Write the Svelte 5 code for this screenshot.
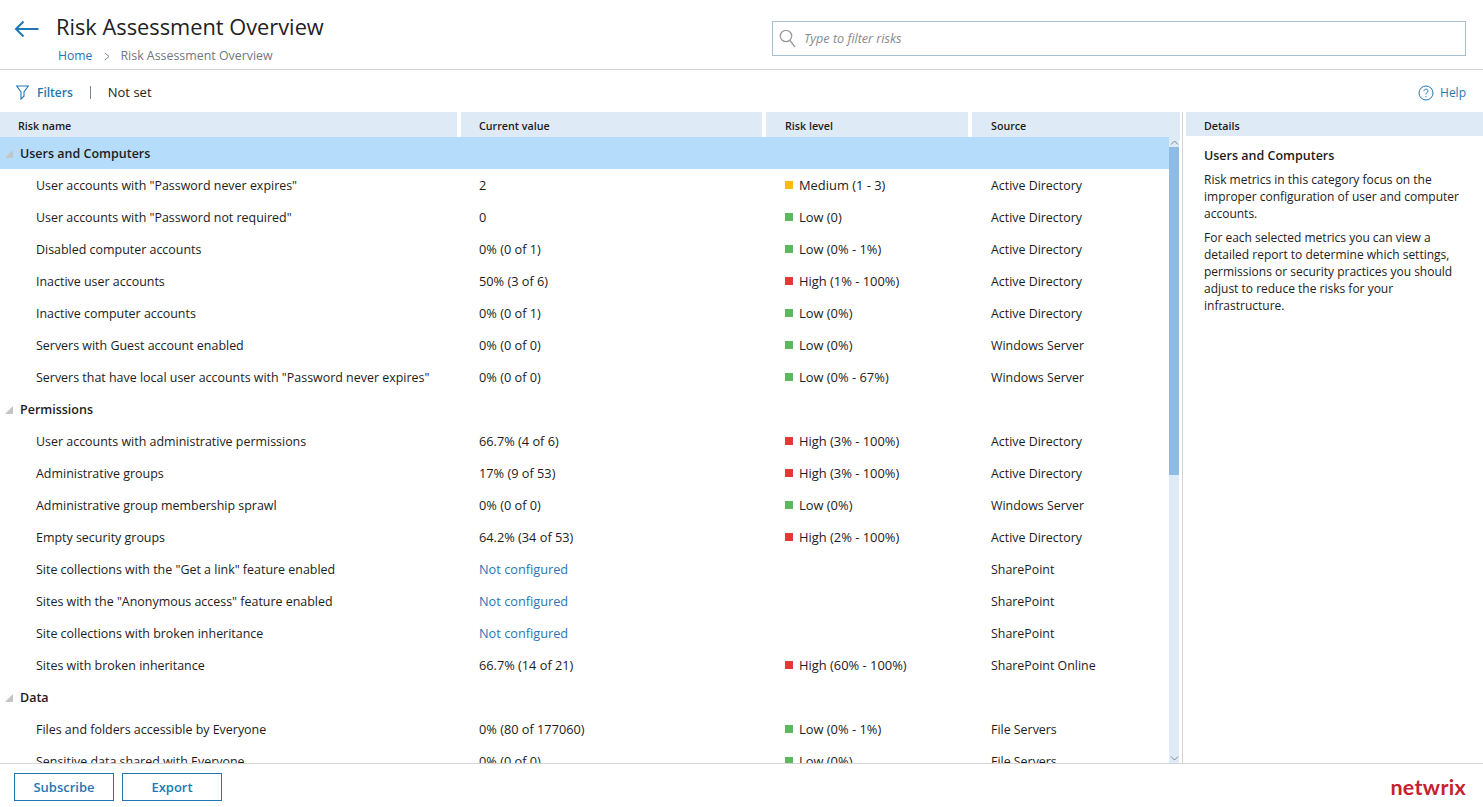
<script>
  const low = 'low', high = 'high', med = 'med';
  const groups = [
    { name: 'Users and Computers', selected: true, rows: [
      ['User accounts with "Password never expires"', '2', med, 'Medium (1 - 3)', 'Active Directory'],
      ['User accounts with "Password not required"', '0', low, 'Low (0)', 'Active Directory'],
      ['Disabled computer accounts', '0% (0 of 1)', low, 'Low (0% - 1%)', 'Active Directory'],
      ['Inactive user accounts', '50% (3 of 6)', high, 'High (1% - 100%)', 'Active Directory'],
      ['Inactive computer accounts', '0% (0 of 1)', low, 'Low (0%)', 'Active Directory'],
      ['Servers with Guest account enabled', '0% (0 of 0)', low, 'Low (0%)', 'Windows Server'],
      ['Servers that have local user accounts with "Password never expires"', '0% (0 of 0)', low, 'Low (0% - 67%)', 'Windows Server']
    ]},
    { name: 'Permissions', rows: [
      ['User accounts with administrative permissions', '66.7% (4 of 6)', high, 'High (3% - 100%)', 'Active Directory'],
      ['Administrative groups', '17% (9 of 53)', high, 'High (3% - 100%)', 'Active Directory'],
      ['Administrative group membership sprawl', '0% (0 of 0)', low, 'Low (0%)', 'Windows Server'],
      ['Empty security groups', '64.2% (34 of 53)', high, 'High (2% - 100%)', 'Active Directory'],
      ['Site collections with the "Get a link" feature enabled', null, null, '', 'SharePoint'],
      ['Sites with the "Anonymous access" feature enabled', null, null, '', 'SharePoint'],
      ['Site collections with broken inheritance', null, null, '', 'SharePoint'],
      ['Sites with broken inheritance', '66.7% (14 of 21)', high, 'High (60% - 100%)', 'SharePoint Online']
    ]},
    { name: 'Data', rows: [
      ['Files and folders accessible by Everyone', '0% (80 of 177060)', low, 'Low (0% - 1%)', 'File Servers'],
      ['Sensitive data shared with Everyone', '0% (0 of 0)', low, 'Low (0%)', 'File Servers']
    ]}
  ];
</script>

<div class="page">
  <header class="top">
    <div class="title-block">
      <svg class="back" width="25" height="18" viewBox="0 0 25 18" fill="none" stroke="#1f78b4" stroke-width="2"><path d="M24.500 9H2M9.500 1.500 2 9l7.500 7.500"/></svg>
      <div>
        <h1>Risk Assessment Overview</h1>
        <nav class="crumbs"><a href="#home">Home</a><svg class="chev" width="6" height="9" viewBox="0 0 6 9" fill="none" stroke="#7b8791"><path d="m1 1 4 3.500L1 8"/></svg><span>Risk Assessment Overview</span></nav>
      </div>
    </div>
    <div class="search">
      <svg width="17" height="19" viewBox="0 0 17 19" fill="none" stroke="#9a9a9a" stroke-width="1.300"><circle cx="7" cy="7" r="5.700"/><path d="m11 11.500 5 6.500"/></svg>
      <span>Type to filter risks</span>
    </div>
  </header>

  <div class="toolbar">
    <svg width="13" height="15" viewBox="0 0 13 15" fill="none" stroke="#1f78b4" stroke-width="1.100"><path d="M.7 1h11.600L8 7v4.200L5 14V7z"/></svg>
    <a class="filters" href="#filters">Filters</a>
    <i class="sep"></i>
    <span class="notset">Not set</span>
    <a class="help" href="#help">
      <svg width="16" height="16" viewBox="0 0 16 16" fill="none" stroke="#1f78b4"><circle cx="8" cy="8" r="7"/><path d="M6 6.200C6 4.800 7 4.200 8 4.200s2 .7 2 1.800c0 1.500-2 1.700-2 3.500M8 11v1.200"/></svg>
      Help
    </a>
  </div>

  <main class="main">
    <section class="table">
      <div class="head">
        <div>Risk name</div><div>Current value</div><div>Risk level</div><div>Source</div>
      </div>
      <div class="body-wrap">
        <div class="rows">
          {#each groups as g}
            <div class="group" class:selected={g.selected}><i class="tri"></i>{g.name}</div>
            {#each g.rows as r}
              <div class="row">
                <div class="name">{r[0]}</div>
                <div class="val">{#if r[1] === null}<a href="#cfg">Not configured</a>{:else}{r[1]}{/if}</div>
                <div class="lvl">{#if r[2]}<i class="dot {r[2]}"></i>{r[3]}{/if}</div>
                <div class="src">{r[4]}</div>
              </div>
            {/each}
          {/each}
        </div>
        <div class="scroll">
          <div class="btn"><svg width="9" height="5" viewBox="0 0 9 5" fill="none" stroke="#7b8791"><path d="m1 4.500 3.500-3.500 3.500 3.500"/></svg></div>
          <div class="thumb"></div>
          <div class="track"></div>
          <div class="btn"><svg width="9" height="5" viewBox="0 0 9 5" fill="none" stroke="#7b8791"><path d="m1 .5 3.500 3.500 3.500-3.500"/></svg></div>
        </div>
      </div>
    </section>
    <aside class="details">
      <div class="dhead">Details</div>
      <div class="dbody">
        <h2>Users and Computers</h2>
        <p>Risk metrics in this category focus on the improper configuration of user and computer accounts.</p>
        <p>For each selected metrics you can view a detailed report to determine which settings, permissions or security practices you should adjust to reduce the risks for your infrastructure.</p>
      </div>
    </aside>
  </main>

  <footer class="foot">
    <button>Subscribe</button>
    <button>Export</button>
    <span class="logo">netwrix</span>
  </footer>
</div>

<style>
  :global(body) { margin: 0; background: #fff; }
  * { box-sizing: border-box; }
  .page {
    height: 807px; width: 1483px; overflow: hidden;
    display: flex; flex-direction: column;
    font-family: "Open Sans", "Noto Sans", sans-serif;
    font-size: 12px; color: #1c1c1c;
  }
  a { color: #1f78b4; text-decoration: none; }

  .top {
    height: 70px; flex: none; border-bottom: 1px solid #d4d4d4;
    display: flex; justify-content: space-between; padding: 0 17px 0 14px;
  }
  .title-block { display: flex; }
  .back { margin: 20px 17px 0 0; }
  h1 { margin: 11px 0 0; font-size: 21.800px; font-weight: 400; line-height: 32px; color: #222; }
  .crumbs { display: flex; align-items: center; gap: 11px; margin: 5px 0 0 2px; line-height: 16px; font-size: 12.200px; }
  .chev { margin: 0 -1px 0 1px; }
  .crumbs span { color: #6f7780; font-size: 12.400px; }
  .search {
    width: 694px; height: 35px; margin-top: 21px;
    border: 1px solid #a5c0d3; display: flex; align-items: center; gap: 8px; padding-left: 6px;
    font-style: italic; font-size: 12.600px; color: #8a8a8a;
  }

  .toolbar { height: 42px; flex: none; display: flex; align-items: center; padding: 3px 17px 0 16px; }
  .filters { margin-left: 8px; font-weight: 600; }
  .sep { width: 1px; height: 13px; background: #7b8791; margin: 0 17px 0 17px; }
  .notset { font-size: 13px; padding-bottom: 2px; }
  .help { margin-left: auto; display: flex; align-items: center; gap: 5px; }
  .help svg { margin-right: 1px; }

  .main { flex: 1; min-height: 0; display: flex; }
  .table { width: 1180px; flex: none; display: flex; flex-direction: column; }
  .head, .row { display: grid; grid-template-columns: 461px 305px 206px 1fr; }
  .head { height: 24px; flex: none; font-weight: 600; font-size: 10.700px; line-height: 28px; }
  .head div { background: #deeaf6; margin-right: 4px; padding-left: 18px; }
  .head div:nth-child(3) { padding-left: 19px; }
  .head div:last-child { margin-right: 0; padding-left: 19px; }
  .body-wrap { flex: 1; min-height: 0; display: flex; margin-top: 1px; }
  .rows { flex: 1; overflow: hidden; font-size: 12.450px; }
  .group {
    height: 32px; display: flex; align-items: center;
    font-weight: 600; font-size: 12.500px; padding-left: 5px; color: #1c1c1c;
  }
  .group.selected { background: #b5dcfb; }
  .tri {
    width: 0; height: 0; margin: 2px 7px 0 0;
    border-style: solid; border-width: 0 0 8px 8px;
    border-color: transparent transparent #c4c4c4 transparent;
  }
  .row { height: 32px; align-items: center; }
  .name { padding-left: 36px; white-space: nowrap; }
  .val { padding-left: 18px; font-size: 12.750px; }
  .lvl { padding-left: 19px; display: flex; align-items: center; font-size: 12.900px; }
  .src { padding-left: 19px; font-size: 12.400px; }
  .dot { width: 8px; height: 8px; margin-right: 6px; }
  .dot.low { background: #5cb85c; }
  .dot.med { background: #fdb913; }
  .dot.high { background: #e53935; }

  .scroll { width: 10px; margin-right: 1px; flex: none; display: flex; flex-direction: column; background: #deeaf6; }
  .btn { height: 10px; display: flex; align-items: center; justify-content: center; }
  .thumb { height: 328px; background: #8fbce6; }
  .track { flex: 1; }

  .details { flex: 1; border-left: 1px solid #d4d4d4; margin-left: 2px; padding-left: 3px; }
  .dhead { height: 24px; background: #deeaf6; font-weight: 600; font-size: 10.700px; line-height: 28px; padding-left: 18px; }
  .dbody { padding: 10px 17px 0 18px; line-height: 17px; }
  h2 { margin: 0 0 5px; font-size: 12.500px; font-weight: 600; line-height: 20px; }
  p { margin: 0 0 7px; }

  .foot {
    height: 44px; flex: none; border-top: 1px solid #d4d4d4;
    display: flex; align-items: center; gap: 8px; padding: 2px 17px 0 14px;
  }
  button {
    width: 100px; height: 28px; background: #fff; border: 1px solid #1f78b4; border-radius: 0;
    color: #1f78b4; font: 600 13px "Open Sans", sans-serif; padding: 0;
  }
  .logo {
    margin-left: auto; color: #c8202f; font: 700 21.500px "Lato", "DejaVu Sans", sans-serif; letter-spacing: .3px;
  }
</style>
